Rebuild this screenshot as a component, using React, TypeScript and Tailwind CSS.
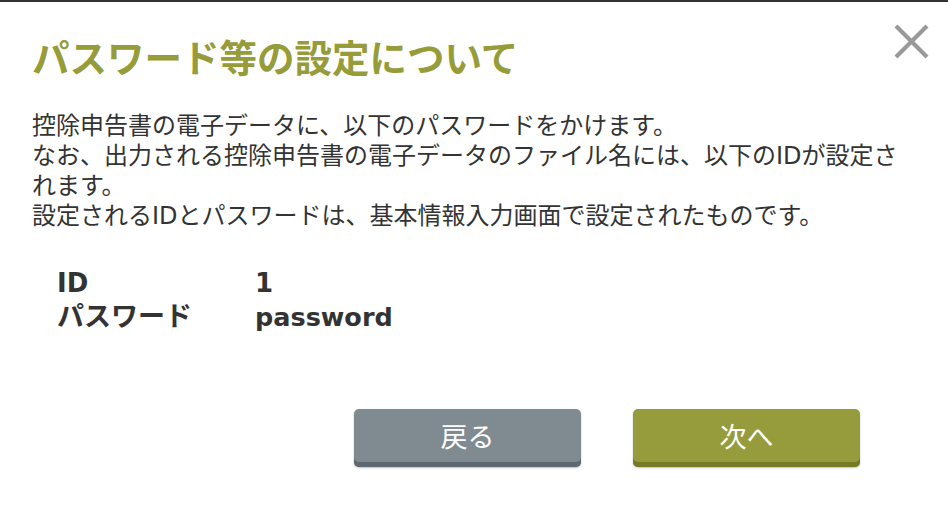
import React from "react";

export default function App() {
  return (
    <div className="relative w-[948px] h-[508px] bg-white border-t-2 border-[#333] overflow-hidden">
      <button className="absolute left-[894px] top-[22px] w-[35px] h-[35px]" aria-label="close">
        <svg width="35" height="35" viewBox="0 0 35 35">
          <path d="M2 2 L33 33 M33 2 L2 33" stroke="#999999" strokeWidth="4.2" strokeLinecap="butt" fill="none" />
        </svg>
      </button>
      <div className="pl-8 pr-[30px] pt-[30px] text-[#333]" style={{ fontFamily: '"DejaVu Sans", "Noto Sans CJK JP", sans-serif' }}>
        <h1
          className="text-[37.5px] leading-[48px] font-bold text-[#969c3a]"
          style={{ fontFamily: '"Noto Sans CJK JP", sans-serif' }}
        >
          パスワード等の設定について
        </h1>
        <div className="mt-[31px] text-[24px] leading-[30px]">
          <p>控除申告書の電子データに、以下のパスワードをかけます。</p>
          <p>なお、出力される控除申告書の電子データのファイル名には、以下のIDが設定されます。</p>
          <p>設定されるIDとパスワードは、基本情報入力画面で設定されたものです。</p>
        </div>
        <div className="mt-[35px] ml-[25px] grid grid-cols-[198px_1fr] text-[26px] leading-[34px] font-bold">
          <div>ID</div>
          <div>1</div>
          <div className="text-[27px]">パスワード</div>
          <div className="text-[25.5px]">password</div>
        </div>
        <div className="mt-[75px] flex justify-end gap-[52px] pr-[58px]">
          <button
            className="w-[227px] h-[58px] rounded-[5px] bg-[#7f8a91] shadow-[inset_0_-5px_0_#5e6870,0_1px_2px_rgba(0,0,0,0.25)] flex items-center justify-center pb-[4px] text-white text-[27px]"
            style={{ fontFamily: '"Noto Sans CJK JP", sans-serif' }}
          >
            戻る
          </button>
          <button
            className="w-[227px] h-[58px] rounded-[5px] bg-[#969c3b] shadow-[inset_0_-5px_0_#747a26,0_1px_2px_rgba(0,0,0,0.25)] flex items-center justify-center pb-[4px] text-white text-[27px]"
            style={{ fontFamily: '"Noto Sans CJK JP", sans-serif' }}
          >
            次へ
          </button>
        </div>
      </div>
    </div>
  );
}
